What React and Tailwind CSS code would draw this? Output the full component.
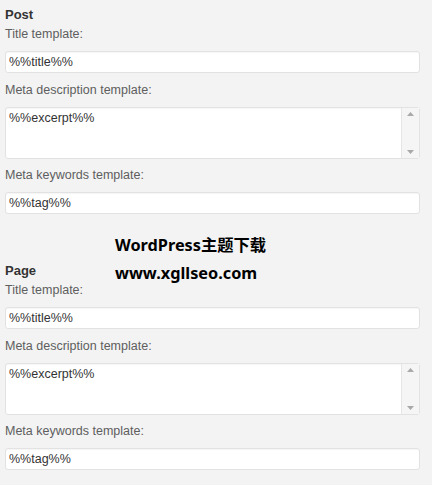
import React from 'react';

const label = 'text-[12.5px] leading-[18px] text-[#5e5e5e]';

const TextInput = ({ value }) => (
  <div className="h-[22px] w-[415px] rounded-[3px] border border-[#e2e2e2] bg-white px-[3px] text-[12.5px] leading-[20px] text-[#333] shadow-[inset_0_1px_1px_rgba(0,0,0,0.04)]">
    {value}
  </div>
);

const TextArea = ({ value }) => (
  <div className="flex h-[52px] w-[415px] rounded-[3px] border border-[#e2e2e2] bg-white shadow-[inset_0_1px_1px_rgba(0,0,0,0.04)]">
    <div className="flex-1 px-[3px] pt-[1px] text-[12.5px] leading-[18px] text-[#333]">{value}</div>
    <div className="flex w-[18px] flex-col items-center justify-between border-l border-[#e6e6e6] bg-[#f5f5f5] py-[4px]">
      <svg width="7" height="4" viewBox="0 0 7 4"><path d="M0 4 L3.5 0 L7 4 Z" fill="#a9a9a9" /></svg>
      <svg width="7" height="4" viewBox="0 0 7 4"><path d="M0 0 L3.5 4 L7 0 Z" fill="#a9a9a9" /></svg>
    </div>
  </div>
);

const Section = ({ title }) => (
  <div>
    <div className="text-[13px] font-bold leading-[17px] text-[#333]">{title}</div>
    <div className={`${label} mt-[2px]`}>Title template:</div>
    <div className="mt-[8px]"><TextInput value="%%title%%" /></div>
    <div className={`${label} mt-[8px]`}>Meta description template:</div>
    <div className="mt-[8px]"><TextArea value="%%excerpt%%" /></div>
    <div className={`${label} mt-[7px]`}>Meta keywords template:</div>
    <div className="mt-[8px]"><TextInput value="%%tag%%" /></div>
  </div>
);

export default function App() {
  return (
    <div
      className="relative h-[485px] w-[432px] overflow-hidden bg-[#f3f3f3] px-[5px] pt-[6px]"
      style={{ fontFamily: '"Liberation Sans", Arial, sans-serif' }}
    >
      <Section title="Post" />
      <div className="mt-[48px]">
        <Section title="Page" />
      </div>

      {/* watermark */}
      <div
        className="absolute left-[115px] top-[231px] text-[16.3px] font-bold leading-[28px] text-black"
        style={{ fontFamily: '"Noto Sans", "Noto Sans CJK SC", sans-serif' }}
      >
        <div>WordPress主题下载</div>
        <div>www.xgllseo.com</div>
      </div>
    </div>
  );
}
